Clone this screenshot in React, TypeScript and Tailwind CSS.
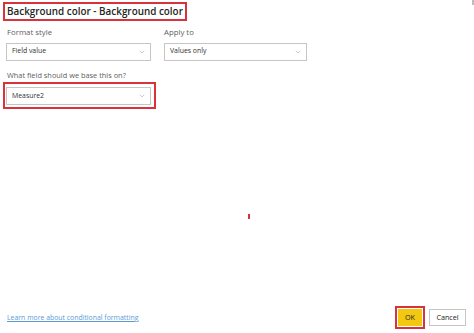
import { ChevronDown } from "lucide-react";

const font = { fontFamily: '"Open Sans", "Noto Sans", sans-serif' };

function Dropdown({ value, width }: { value: string; width: string }) {
  return (
    <div
      className={`${width} h-[18px] flex items-center justify-between border border-[#c8c6c4] bg-white pl-[5px] pr-[4px]`}
    >
      <span className="text-[6.9px] text-[#323130] leading-none">{value}</span>
      <ChevronDown className="w-[8px] h-[8px] text-[#8a8886]" strokeWidth={1.3} />
    </div>
  );
}

export default function App() {
  return (
    <div
      className="w-[474px] h-[333px] bg-white flex flex-col overflow-hidden relative"
      style={font}
    >
      {/* titre */}
      <div className="flex pt-[2px] pl-[3px]">
        <div className="flex items-center border-2 border-[#d8333d] px-[2px] h-[19px]">
          <span className="text-[9.9px] font-semibold text-[#252423] leading-none">
            Background color - Background color
          </span>
        </div>
      </div>

      {/* format / apply */}
      <div className="flex gap-[13px] pl-[6px] pt-[8px]">
        <div className="flex flex-col">
          <span className="text-[7.8px] text-[#605e5c] leading-none pl-[1px]">Format style</span>
          <div className="mt-[6px]">
            <Dropdown value="Field value" width="w-[145px]" />
          </div>
        </div>
        <div className="flex flex-col">
          <span className="text-[7.8px] text-[#605e5c] leading-none">Apply to</span>
          <div className="mt-[6px]">
            <Dropdown value="Values only" width="w-[143px]" />
          </div>
        </div>
      </div>

      {/* champ */}
      <div className="pl-[7px] pt-[11px]">
        <span className="block text-[7.4px] text-[#605e5c] leading-none">
          What field should we base this on?
        </span>
      </div>
      <div className="flex pl-[3px] pt-[3px]">
        <div className="border-2 border-[#d8333d] pl-[1px] pr-[3px] pt-[3px] pb-[2px]">
          <Dropdown value="Measure2" width="w-[145px]" />
        </div>
      </div>

      {/* zone vide */}
      <div className="flex-1 pl-[248px] pt-[105px]">
        <div className="w-[2px] h-[5px] bg-[#d8333d]" />
      </div>

      {/* pied */}
      <div className="flex items-center justify-between pl-[7px] pr-[8px] pb-[4px]">
        <a className="text-[6.9px] text-[#5b9bd5] underline leading-none mt-[2px]">
          Learn more about conditional formatting
        </a>
        <div className="flex items-center gap-[4px]">
          <div className="border-2 border-[#d8333d] p-[1px]">
            <div className="w-[24px] h-[17px] bg-[#f2c811] flex items-center justify-center text-[7.2px] text-[#252423]">
              OK
            </div>
          </div>
          <div className="w-[37px] h-[17px] border border-[#c8c6c4] bg-white flex items-center justify-center text-[7.2px] text-[#252423]">
            Cancel
          </div>
        </div>
      </div>

      <div className="absolute top-0 right-0 w-[2px] h-[5px] bg-[#bdbdbd]" />
    </div>
  );
}
